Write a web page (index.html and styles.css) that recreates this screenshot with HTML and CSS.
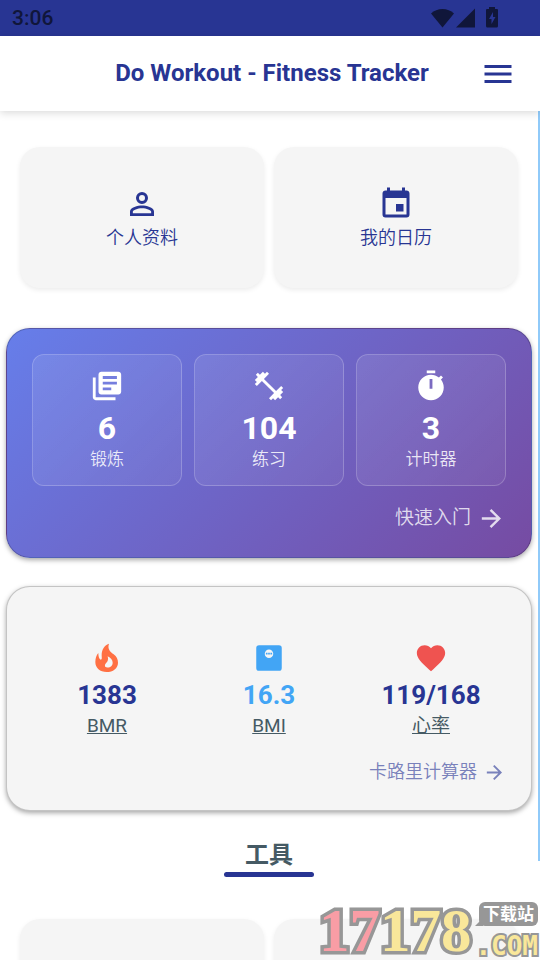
FILE: index.html
```html
<!DOCTYPE html>
<html lang="zh-CN">
<head>
<meta charset="utf-8">
<meta name="viewport" content="width=device-width, initial-scale=1">
<title>Do Workout - Fitness Tracker</title>
<link rel="stylesheet" href="styles.css">
</head>
<body>
<div class="app">
  <div class="status">
    <span>3:06</span>
    <svg class="status-icons" viewBox="0 0 68 22" aria-hidden="true">
      <path d="M0 6.500C6 .5 17 .5 23 6.500L11.500 20.500Z"/>
      <path d="M44 1.500V20.500H25Z"/>
      <path fill-rule="evenodd" d="M58 0H64V2H66Q67 2 67 3V19Q67 20.500 65.500 20.500H56.500Q55 20.500 55 19V3Q55 2 56 2H58ZM62 5L58 12H60.500V17L64.500 10H62Z"/>
    </svg>
  </div>
  <header class="header">
    <h1 class="title">Do Workout - Fitness Tracker</h1>
    <button class="menu" aria-label="Menu">
      <svg class="icon-tile" viewBox="0 0 24 24"><path d="M3 6H21V8H3V6M3 11H21V13H3V11M3 16H21V18H3V16Z"/></svg>
    </button>
  </header>
  <main class="content">
    <nav class="tiles">
      <a class="tile" href="#profile">
        <svg class="icon-tile" viewBox="0 0 24 24"><path d="M12 4A4 4 0 0 1 16 8A4 4 0 0 1 12 12A4 4 0 0 1 8 8A4 4 0 0 1 12 4M12 6A2 2 0 0 0 10 8A2 2 0 0 0 12 10A2 2 0 0 0 14 8A2 2 0 0 0 12 6M12 13C14.670 13 20 14.330 20 17V20H4V17C4 14.330 9.330 13 12 13M12 14.900C9.030 14.900 5.900 16.360 5.900 17V18.100H18.100V17C18.100 16.360 14.970 14.900 12 14.900Z"/></svg>
        <span>个人资料</span>
      </a>
      <a class="tile" href="#calendar">
        <svg class="icon-tile" viewBox="0 0 24 24"><path d="M19 19H5V8H19M16 1V3H8V1H6V3H5C3.890 3 3 3.890 3 5V19A2 2 0 0 0 5 21H19A2 2 0 0 0 21 19V5C21 3.890 20.100 3 19 3H18V1M17 12H12V17H17V12Z"/></svg>
        <span>我的日历</span>
      </a>
    </nav>

    <section class="card summary">
      <div class="columns">
        <div class="box">
          <svg class="icon" viewBox="0 0 24 24"><path d="M4 6H2v14c0 1.100.9 2 2 2h14v-2H4V6zm16-4H8c-1.100 0-2 .9-2 2v12c0 1.100.9 2 2 2h12c1.100 0 2-.9 2-2V4c0-1.100-.9-2-2-2zm-1 5H9V5h10v2zm0 4H9V9h10v2zm-4 4H9v-2h6v2z"/></svg>
          <strong class="count">6</strong>
          <span class="caption">锻炼</span>
        </div>
        <div class="box">
          <svg class="icon" viewBox="0 0 24 24"><path d="M20.570 14.860L22 13.430L20.570 12L17 15.570L8.430 7L12 3.430L10.570 2L9.140 3.430L7.710 2L5.570 4.140L4.140 2.710L2.710 4.140L4.140 5.570L2 7.710L3.430 9.140L2 10.570L3.430 12L7 8.430L15.570 17L12 20.570L13.430 22L14.860 20.570L16.290 22L18.430 19.860L19.860 21.290L21.290 19.860L19.860 18.430L22 16.290L20.570 14.860Z"/></svg>
          <strong class="count">104</strong>
          <span class="caption">练习</span>
        </div>
        <div class="box">
          <svg class="icon" viewBox="0 0 24 24"><path d="M19.030 7.390L20.450 5.970C20 5.460 19.550 5 19.040 4.560L17.620 6C16.070 4.740 14.120 4 12 4C7.030 4 3 8.030 3 13S7.030 22 12 22C17 22 21 17.970 21 13C21 10.880 20.260 8.930 19.030 7.390M13 14H11V7H13V14M15 1H9V3H15V1Z"/></svg>
          <strong class="count">3</strong>
          <span class="caption">计时器</span>
        </div>
      </div>
      <a class="more more-light" href="#start">快速入门
        <svg class="arrow-large" viewBox="0 0 24 24"><path d="M4 11V13H16L10.500 18.500L11.920 19.920L19.840 12L11.920 4.080L10.500 5.500L16 11H4Z"/></svg>
      </a>
    </section>

    <section class="card health">
      <div class="columns">
        <div class="metric">
          <svg class="icon fire" viewBox="0 0 102 102"><path fill-rule="evenodd" d="M57 8C51 24 62 33 71 40C80 47 84 55 84 65C84 82 69 93 50 93C30 93 16 81 16 63C16 52 19 43 25 36C25 45 27 54 32 56C37 56 35 49 35 43C35 26 42 14 57 8ZM53 46C56 56 53 62 49 65C44 70 43 77 49 79C59 82 68 75 68 65C68 57 62 51 53 46Z"/></svg>
          <strong class="value">1383</strong>
          <a class="name" href="#bmr">BMR</a>
        </div>
        <div class="metric">
          <svg class="icon scale" viewBox="0 0 24 24"><path d="M5 3H19A2 2 0 0 1 21 5V19A2 2 0 0 1 19 21H5A2 2 0 0 1 3 19V5A2 2 0 0 1 5 3M12 6A3 3 0 0 0 12 12A3 3 0 0 0 12 6M9.800 8.300H11V9.600H9.800ZM11.400 8.300H12.600V9.600H11.400ZM13 8.300H14.200V9.600H13Z" fill-rule="evenodd"/></svg>
          <strong class="value value-blue">16.3</strong>
          <a class="name" href="#bmi">BMI</a>
        </div>
        <div class="metric">
          <svg class="icon heart" viewBox="0 0 24 24"><path d="M12 21.350L10.550 20.030C5.400 15.360 2 12.270 2 8.500C2 5.410 4.420 3 7.500 3C9.240 3 10.910 3.810 12 5.080C13.090 3.810 14.760 3 16.500 3C19.580 3 22 5.410 22 8.500C22 12.270 18.600 15.360 13.450 20.030L12 21.350Z"/></svg>
          <strong class="value">119/168</strong>
          <a class="name" href="#heart">心率</a>
        </div>
      </div>
      <a class="more more-blue" href="#calories">卡路里计算器
        <svg class="arrow-small" viewBox="0 0 24 24"><path d="M4 11V13H16L10.500 18.500L11.920 19.920L19.840 12L11.920 4.080L10.500 5.500L16 11H4Z"/></svg>
      </a>
    </section>

    <h2 class="heading">工具</h2>
    <div class="tiles tiles-tools">
      <div class="tile"></div>
      <div class="tile"></div>
    </div>
    <div class="scrollbar"></div>
  </main>
  <div class="watermark">
    <span class="digits"><span class="red">17</span>178</span>
    <span class="site"><span class="bubble">下载站</span><span class="domain">.COM</span></span>
  </div>
</div>
</body>
</html>
```
FILE: styles.css
```css
* { box-sizing: border-box; }

body {
  margin: 0;
  background: #fff;
  color: #283593;
  font-family: Roboto, "Noto Sans CJK SC", sans-serif;
}

a { color: inherit; text-decoration: none; }
svg { display: block; fill: currentColor; }

.app {
  display: flex;
  flex-direction: column;
  height: 100vh;
  overflow: hidden;
}

.status {
  display: flex;
  flex: none;
  justify-content: space-between;
  align-items: center;
  height: 36px;
  padding: 0 41px 0 12px;
  background: #283593;
  color: #10163a;
  font-size: 21px;
  font-weight: 500;
}
.status-icons { width: 68px; height: 22px; }

.header {
  position: relative;
  z-index: 1;
  display: grid;
  flex: none;
  grid-template-columns: 1fr auto 1fr;
  align-items: center;
  height: 75px;
  padding: 0 24px 0 28px;
  background: #fff;
  box-shadow: 0 2px 8px rgba(0, 0, 0, .15);
}
.title {
  grid-column: 2;
  margin: 0;
  padding-bottom: 2px;
  font-size: 24px;
  font-weight: 700;
  line-height: 32px;
}
.menu {
  justify-self: end;
  padding: 0;
  border: 0;
  background: none;
  color: inherit;
}

.content {
  position: relative;
  flex: 1;
  min-height: 0;
  padding-right: 2px;
  overflow: hidden auto;
  scrollbar-width: none;
}
.scrollbar {
  position: absolute;
  top: 0;
  right: 0;
  width: 2px;
  height: 750px;
  background: #90caf9;
}

.tiles {
  display: grid;
  grid-template-columns: 1fr 1fr;
  gap: 10px;
  padding: 36px 20px 0;
}
.tile {
  display: flex;
  flex-direction: column;
  align-items: center;
  justify-content: center;
  gap: 4px;
  min-height: 141px;
  padding-top: 1px;
  border-radius: 20px;
  background: #f5f5f5;
  box-shadow: 0 2px 5px rgba(0, 0, 0, .08);
  font-size: 18px;
  font-weight: 350;
  line-height: 24px;
}
.tiles-tools { padding-top: 42px; }
.icon-tile { width: 36px; height: 36px; }
.icon { width: 34px; height: 34px; }

.card {
  margin: 0 6px;
  border: 1px solid rgba(0, 0, 0, .2);
  border-radius: 24px;
  box-shadow: 0 2px 5px rgba(0, 0, 0, .35);
}
.summary {
  margin-top: 40px;
  padding: 25px 25px 24px;
  background: linear-gradient(135deg, #667eea, #764ba2);
  color: #fff;
}
.health {
  margin-top: 28px;
  padding: 54px 25px 23px;
  background: #f5f5f5;
}
.columns {
  display: grid;
  grid-template-columns: repeat(3, 1fr);
  gap: 12px;
}
.box {
  display: flex;
  flex-direction: column;
  align-items: center;
  padding: 14px 0;
  border: 1px solid rgba(255, 255, 255, .2);
  border-radius: 12px;
  background: linear-gradient(135deg, rgba(255, 255, 255, .1), rgba(255, 255, 255, .05));
}
.count {
  margin-top: 6px;
  font-size: 32px;
  line-height: 38px;
}
.caption {
  color: rgba(255, 255, 255, .85);
  font-size: 17px;
  font-weight: 350;
  line-height: 24px;
}

.metric {
  display: flex;
  flex-direction: column;
  align-items: center;
}
.fire { color: #ff7043; }
.scale { color: #42a5f5; }
.heart { color: #ef5350; }
.value {
  margin-top: 4px;
  font-size: 26px;
  line-height: 32px;
}
.value-blue { color: #42a5f5; }
.name {
  margin-top: 3px;
  color: #455a64;
  font-size: 19px;
  line-height: 24px;
  font-weight: 400;
  text-decoration: underline;
}

.more {
  display: flex;
  align-items: center;
  justify-content: flex-end;
  gap: 6px;
  font-weight: 350;
  line-height: 30px;
}
.more-light {
  margin-top: 17px;
  color: rgba(255, 255, 255, .8);
  font-size: 19px;
}
.more-blue {
  margin-top: 19px;
  color: #7981bb;
  font-size: 18px;
}
.arrow-large { width: 29px; height: 29px; }
.arrow-small { width: 23px; height: 23px; }

.heading {
  display: flex;
  flex-direction: column;
  align-items: center;
  gap: 1px;
  margin: 28px 0 0;
  color: #455a64;
  font-size: 24px;
  font-weight: 700;
  line-height: 32px;
}
.heading::after {
  width: 90px;
  height: 5px;
  border-radius: 3px;
  background: #283593;
  content: "";
}

.watermark {
  position: absolute;
  right: 0;
  bottom: 0;
  z-index: 2;
  display: flex;
  align-items: flex-end;
  gap: 4px;
  padding-right: 2px;
  font-weight: 700;
}
.digits {
  color: #f9e79a;
  font-family: "Liberation Serif", serif;
  font-size: 61px;
  line-height: 58px;
  -webkit-text-stroke: 7px #979797;
  paint-order: stroke fill;
}
.red { color: #f99da5; }
.site {
  display: flex;
  flex-direction: column;
  align-items: flex-end;
  gap: 6px;
}
.bubble {
  position: relative;
  padding: 0 4px;
  border-radius: 6px;
  background: #979797;
  color: #fff;
  font-size: 17px;
  line-height: 24px;
}
.bubble::before {
  position: absolute;
  bottom: 0;
  left: -4px;
  border-bottom: 8px solid #979797;
  border-left: 8px solid transparent;
  content: "";
}
.domain {
  color: #f9e79a;
  font-family: "DejaVu Sans Mono", monospace;
  font-size: 26px;
  line-height: 28px;
  -webkit-text-stroke: 4px #979797;
  paint-order: stroke fill;
}
```
